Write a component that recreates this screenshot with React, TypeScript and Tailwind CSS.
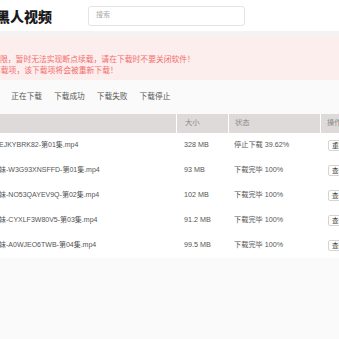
import React from "react";

const rows = [
  { name: "EJKYBRK82-第01集.mp4", size: "328 MB", status: "停止下载 39.62%", btn: "重新下载" },
  { name: "妹-W3G93XNSFFD-第01集.mp4", size: "93 MB", status: "下载完毕 100%", btn: "查看" },
  { name: "妹-NO53QAYEV9Q-第02集.mp4", size: "102 MB", status: "下载完毕 100%", btn: "查看" },
  { name: "妹-CYXLF3W80V5-第03集.mp4", size: "91.2 MB", status: "下载完毕 100%", btn: "查看" },
  { name: "妹-A0WJEO6TWB-第04集.mp4", size: "99.5 MB", status: "下载完毕 100%", btn: "查看" },
];

export default function App() {
  return (
    <div className="w-[339px] h-[339px] overflow-hidden bg-[#fafafa] font-['Liberation_Sans','Noto_Sans_CJK_SC',sans-serif]">
      <div className="h-[31px] bg-white flex items-center">
        <div className="ml-[-4px] w-[92px] shrink-0 whitespace-nowrap text-[14px] font-black leading-none text-[#1a1a1a] pt-[3px]">
          黑人视频
        </div>
        <div className="w-[157px] h-[20px] border border-[#e4e4e4] rounded-[3px] bg-white flex items-center pl-[7px] text-[7px] text-[#aaa]">
          搜索
        </div>
      </div>
      <div className="h-[5px] bg-[#f3f3f3]" />
      <div className="h-[44px] bg-[#fdeeee] pt-[18px] text-[7.8px] leading-[11px] text-[#f26d6d] whitespace-nowrap">
        <div>限，暂时无法实现断点续载，请在下载时不要关闭软件！</div>
        <div className="ml-[-7px]">下载项，该下载项将会被重新下载！</div>
      </div>
      <div className="h-[34px] flex items-center gap-[12px] text-[7.7px] text-[#555] whitespace-nowrap overflow-hidden">
        <span className="ml-[-31.5px]">全部下载</span>
        <span>正在下载</span>
        <span>下载成功</span>
        <span>下载失败</span>
        <span>下载停止</span>
      </div>
      <div className="grid grid-cols-[176px_51px_91px_30px] gap-x-[1px] bg-white h-[19px] text-[7.3px] text-[#8a8a8a] whitespace-nowrap">
        <div className="bg-[#dddad9]" />
        <div className="bg-[#dddad9] flex items-center pl-[8px]">大小</div>
        <div className="bg-[#dddad9] flex items-center pl-[6px]">状态</div>
        <div className="bg-[#dddad9] flex items-center pl-[6px]">操作</div>
      </div>
      {rows.map((r, i) => (
        <div
          key={i}
          className="grid grid-cols-[176px_51px_91px_30px] gap-x-[1px] bg-white h-[25px] text-[7.2px] text-[#555] whitespace-nowrap"
        >
          <div className="flex items-center overflow-hidden text-[7px] text-[#555]">
            <span className="ml-[-1px]">{r.name}</span>
          </div>
          <div className="flex items-center pl-[7px]">{r.size}</div>
          <div className="flex items-center pl-[5px]">{r.status}</div>
          <div className="flex items-center pl-[7px] overflow-hidden">
            <span className="h-[11px] border border-[#d4d4d4] rounded-[2px] px-[3px] flex items-center text-[6.5px] text-[#333] bg-white">
              {r.btn}
            </span>
          </div>
        </div>
      ))}
    </div>
  );
}
